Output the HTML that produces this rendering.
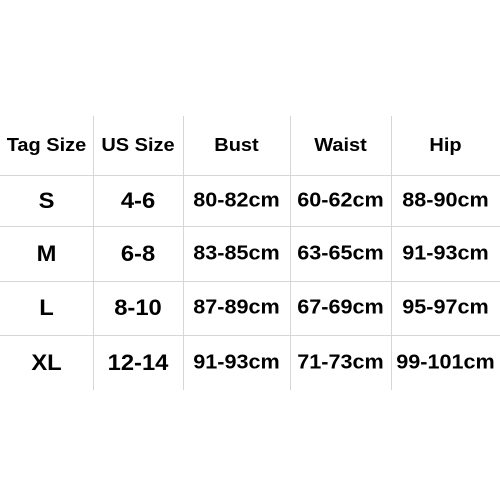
<!DOCTYPE html><html><head><style>
body{margin:0;width:500px;height:500px;background:#fff;position:relative;overflow:hidden;font-family:"Liberation Sans",Arial,sans-serif;font-weight:bold;color:#000}
.v{position:absolute;top:116px;height:274px;width:1px;background:#d6d6d6}
.h{position:absolute;left:0;width:500px;height:1px;background:#d6d6d6}
.t{position:absolute;text-align:center;transform:translateY(-50%) scaleX(1.08);white-space:nowrap}
.hd{font-size:18.5px}.d{font-size:20px}.b{font-size:22px}
</style></head><body>
<div class="v" style="left:93px"></div><div class="v" style="left:183px"></div><div class="v" style="left:290px"></div><div class="v" style="left:391px"></div>
<div class="h" style="top:175px"></div><div class="h" style="top:226px"></div><div class="h" style="top:281px"></div><div class="h" style="top:335px"></div>
<div class="t hd" style="left:0;width:93px;top:145px">Tag Size</div>
<div class="t hd" style="left:93px;width:90px;top:145px">US Size</div>
<div class="t hd" style="left:183px;width:107px;top:145px">Bust</div>
<div class="t hd" style="left:290px;width:101px;top:145px">Waist</div>
<div class="t hd" style="left:391px;width:109px;top:145px">Hip</div>

<div class="t b" style="left:0;width:93px;top:201px">S</div>
<div class="t b" style="left:93px;width:90px;top:201px">4-6</div>
<div class="t d" style="left:183px;width:107px;top:201px">80-82cm</div>
<div class="t d" style="left:290px;width:101px;top:201px">60-62cm</div>
<div class="t d" style="left:391px;width:109px;top:201px">88-90cm</div>

<div class="t b" style="left:0;width:93px;top:254px">M</div>
<div class="t b" style="left:93px;width:90px;top:254px">6-8</div>
<div class="t d" style="left:183px;width:107px;top:254px">83-85cm</div>
<div class="t d" style="left:290px;width:101px;top:254px">63-65cm</div>
<div class="t d" style="left:391px;width:109px;top:254px">91-93cm</div>

<div class="t b" style="left:0;width:93px;top:308px">L</div>
<div class="t b" style="left:93px;width:90px;top:308px">8-10</div>
<div class="t d" style="left:183px;width:107px;top:308px">87-89cm</div>
<div class="t d" style="left:290px;width:101px;top:308px">67-69cm</div>
<div class="t d" style="left:391px;width:109px;top:308px">95-97cm</div>

<div class="t b" style="left:0;width:93px;top:363px">XL</div>
<div class="t b" style="left:93px;width:90px;top:363px">12-14</div>
<div class="t d" style="left:183px;width:107px;top:363px">91-93cm</div>
<div class="t d" style="left:290px;width:101px;top:363px">71-73cm</div>
<div class="t d" style="left:391px;width:109px;top:363px">99-101cm</div>
</body></html>
